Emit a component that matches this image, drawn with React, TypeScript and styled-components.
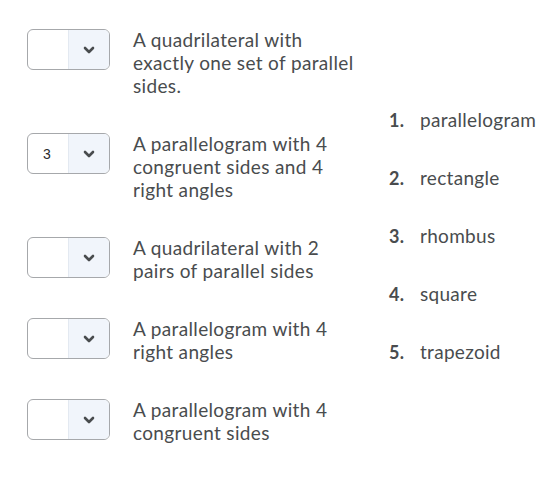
import React from "react";
import styled, { createGlobalStyle } from "styled-components";

const GlobalStyle = createGlobalStyle`
  body {
    margin: 0;
    background: #ffffff;
    font-family: Lato, "Noto Sans", sans-serif;
    color: #494c4e;
  }
`;

const questions = [
  { value: "", text: "A quadrilateral with exactly one set of parallel sides." },
  { value: "3", text: "A parallelogram with 4 congruent sides and 4 right angles" },
  { value: "", text: "A quadrilateral with 2 pairs of parallel sides" },
  { value: "", text: "A parallelogram with 4 right angles" },
  { value: "", text: "A parallelogram with 4 congruent sides" },
];

const answers = ["parallelogram", "rectangle", "rhombus", "square", "trapezoid"];

const Chevron = () => (
  <svg width="12" height="8" viewBox="0 0 12 8">
    <path
      d="M2 2 L6 6 L10 2"
      fill="none"
      stroke="#494c4e"
      strokeWidth="2.6"
      strokeLinecap="round"
      strokeLinejoin="round"
    />
  </svg>
);

const App = () => {
  return (
    <>
      <GlobalStyle />
      <Page>
        <QuestionList>
          {questions.map((q, i) => (
            <QuestionRow key={i}>
              <Select>
                <SelectValue>{q.value}</SelectValue>
                <SelectArrow>
                  <Chevron />
                </SelectArrow>
              </Select>
              <QuestionText>{q.text}</QuestionText>
            </QuestionRow>
          ))}
        </QuestionList>
        <AnswerList>
          {answers.map((a, i) => (
            <AnswerRow key={a}>
              <AnswerNumber>{i + 1}.</AnswerNumber>
              <AnswerText>{a}</AnswerText>
            </AnswerRow>
          ))}
        </AnswerList>
      </Page>
    </>
  );
};

const Page = styled.div`
  display: flex;
  padding: 29px 0 0 27px;
  width: 544px;
  height: 481px;
  box-sizing: border-box;
`;
const QuestionList = styled.div`
  display: flex;
  flex-direction: column;
  gap: 36px;
  width: 362px;
`;
const QuestionRow = styled.div`
  display: flex;
  align-items: flex-start;
  gap: 23px;
`;
const Select = styled.div`
  flex: none;
  display: flex;
  width: 83px;
  height: 41px;
  box-sizing: border-box;
  border: 1px solid #a6a8ab;
  border-radius: 6px;
  overflow: hidden;
  background: #ffffff;
`;
const SelectValue = styled.div`
  flex: 1;
  display: flex;
  align-items: center;
  padding-left: 15px;
  font-family: "Liberation Sans", Arial, sans-serif;
  font-size: 14px;
  color: #2a2b2c;
`;
const SelectArrow = styled.div`
  width: 40px;
  display: flex;
  align-items: center;
  justify-content: center;
  background: #f1f5fb;
  border-left: 1px solid #e3e9f1;
`;
const QuestionText = styled.div`
  width: 222px;
  font-size: 19px;
  line-height: 23px;
  letter-spacing: 0.35px;
  margin-top: -1px;
`;
const AnswerList = styled.div`
  display: flex;
  flex-direction: column;
  gap: 35px;
  padding-top: 79px;
`;
const AnswerRow = styled.div`
  display: flex;
  align-items: baseline;
  font-size: 19px;
  line-height: 23px;
  letter-spacing: 0.3px;
  & + & {
    margin-top: -1px;
  }
`;
const AnswerNumber = styled.span`
  width: 31px;
  font-weight: bold;
  font-size: 18px;
`;
const AnswerText = styled.span``;

export default App;
